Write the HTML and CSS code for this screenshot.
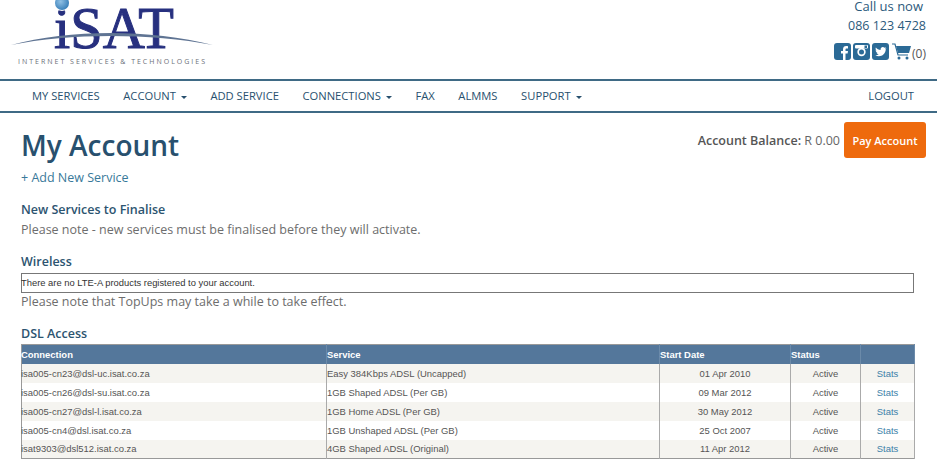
FILE: index.html
```html
<!DOCTYPE html>
<html lang="en">
<head>
<meta charset="utf-8">
<title>My Account</title>
<link rel="stylesheet" href="styles.css">
</head>
<body>
<header class="top">
  <svg class="logo" width="220" height="79" viewBox="0 0 220 79">
    <defs>
      <radialGradient id="ball" cx="0.4" cy="0.4" r="0.7"><stop offset="0" stop-color="#8fc0e4"/><stop offset="1" stop-color="#2f78b4"/></radialGradient>
    </defs>
    <text class="logo-name" x="54" y="48" textLength="120" lengthAdjust="spacingAndGlyphs">iSAT</text>
    <circle class="logo-gap" cx="62" cy="2" r="9"/>
    <circle cx="62" cy="3" r="7" fill="url(#ball)"/>
    <path class="logo-swoosh" d="M11 45 C70 29 150 29 213 45 C150 33 70 33 11 45Z"/>
    <text class="logo-tag" x="18" y="64" textLength="187">INTERNET SERVICES &amp; TECHNOLOGIES</text>
  </svg>
  <div class="contact">
    <div class="call">Call us now</div>
    <div class="phone">086 123 4728</div>
    <div class="social">
      <svg class="ico" width="17" height="17" viewBox="0 0 17 17"><rect width="17" height="17" rx="3"/><path class="cut" d="M11.5 17v-6.4h2.1l.4-2.5h-2.5V6.6c0-.8.3-1.2 1.2-1.2H14V3.2c-.4-.1-1.100-.1-1.800-.1-2 0-3.200 1.200-3.200 3.300v1.700H7v2.500h2V17z"/></svg>
      <svg class="ico" width="17" height="17" viewBox="0 0 17 17"><rect width="17" height="17" rx="3"/><circle class="cut" cx="8.500" cy="9" r="4.200"/><circle cx="8.500" cy="9" r="2.500"/><rect class="cut" x="2" y="2" width="13" height="3.500" rx="1"/><rect x="11.500" y="2.500" width="2.500" height="2.500"/></svg>
      <svg class="ico" width="17" height="17" viewBox="0 0 17 17"><rect width="17" height="17" rx="3"/><path class="cut" d="M14.200 5.200c-.4.200-.9.300-1.300.4.500-.3.800-.7 1-1.300-.4.300-.9.400-1.400.5-.9-1-2.500-1-3.300 0-.6.600-.8 1.400-.6 2.200C6.700 6.900 5 6 3.900 4.600c-.6 1-.3 2.400.7 3-.4 0-.7-.1-1-.3 0 1.100.8 2.100 1.900 2.300-.3.100-.7.100-1 0 .3.900 1.200 1.600 2.200 1.600-1 .8-2.200 1.100-3.400 1 3.700 2.300 10.500.8 10.500-6.700.4-.1.700-.4.900-.3z"/></svg>
      <svg class="cart" width="19" height="17" viewBox="0 0 19 17"><path class="cart-line" d="M0 1h3l3 11h10"/><path class="cart-body" d="M4 3h15l-2 7H6z"/><circle class="cart-body" cx="7" cy="15" r="1.500"/><circle class="cart-body" cx="15" cy="15" r="1.500"/></svg>
      <span class="count">(0)</span>
    </div>
  </div>
</header>

<nav class="nav">
  <ul class="nav-left">
    <li>MY SERVICES</li>
    <li>ACCOUNT <i class="caret"></i></li>
    <li>ADD SERVICE</li>
    <li>CONNECTIONS <i class="caret"></i></li>
    <li>FAX</li>
    <li>ALMMS</li>
    <li>SUPPORT <i class="caret"></i></li>
  </ul>
  <div class="logout">LOGOUT</div>
</nav>

<main class="content">
  <div class="title-row">
    <div>
      <h1>My Account</h1>
      <a class="add">+ Add New Service</a>
    </div>
    <div class="balance">
      <span><b>Account Balance:</b> R 0.00</span>
      <button class="pay">Pay Account</button>
    </div>
  </div>

  <h2 class="first">New Services to Finalise</h2>
  <p>Please note - new services must be finalised before they will activate.</p>

  <h2 class="wireless">Wireless</h2>
  <div class="notice">There are no LTE-A products registered to your account.</div>
  <p>Please note that TopUps may take a while to take effect.</p>

  <h2 class="dsl">DSL Access</h2>
  <table class="services">
    <colgroup><col class="c1"><col class="c2"><col class="c3"><col class="c4"><col class="c5"></colgroup>
    <thead>
      <tr><th>Connection</th><th>Service</th><th>Start Date</th><th>Status</th><th></th></tr>
    </thead>
    <tbody>
      <tr><td>isa005-cn23@dsl-uc.isat.co.za</td><td>Easy 384Kbps ADSL (Uncapped)</td><td class="mid">01 Apr 2010</td><td class="mid">Active</td><td class="mid link">Stats</td></tr>
      <tr><td>isa005-cn26@dsl-su.isat.co.za</td><td>1GB Shaped ADSL (Per GB)</td><td class="mid">09 Mar 2012</td><td class="mid">Active</td><td class="mid link">Stats</td></tr>
      <tr><td>isa005-cn27@dsl-l.isat.co.za</td><td>1GB Home ADSL (Per GB)</td><td class="mid">30 May 2012</td><td class="mid">Active</td><td class="mid link">Stats</td></tr>
      <tr><td>isa005-cn4@dsl.isat.co.za</td><td>1GB Unshaped ADSL (Per GB)</td><td class="mid">25 Oct 2007</td><td class="mid">Active</td><td class="mid link">Stats</td></tr>
      <tr><td>isat9303@dsl512.isat.co.za</td><td>4GB Shaped ADSL (Original)</td><td class="mid">11 Apr 2012</td><td class="mid">Active</td><td class="mid link">Stats</td></tr>
    </tbody>
  </table>
</main>
</body>
</html>
```
FILE: styles.css
```css
* { box-sizing: border-box; }
html, body { margin: 0; height: 460px; overflow: hidden; background: #fff; }
body { font-family: "Open Sans", sans-serif; color: #666; width: 937px; }

.top { display: flex; justify-content: space-between; height: 79px; padding-right: 11px; }
.logo { display: block; }
.logo-name { font-family: "Liberation Serif", serif; font-size: 60px; fill: #27307f; stroke: #27307f; stroke-width: 1px; }
.logo-gap { fill: #fff; }
.logo-swoosh { fill: #5f7493; }
.logo-tag { font-family: "Open Sans", sans-serif; font-size: 7px; fill: #6b6f78; }

.contact { text-align: right; color: #2c5a7c; font-size: 12.500px; line-height: 15px; }
.call { margin-right: 3px; font-size: 13px; line-height: 13px; }
.phone { margin-top: 5px; }
.social { display: flex; justify-content: flex-end; align-items: center; gap: 2px; margin-top: 9px; height: 19px; }
.ico { fill: #2b6a96; }
.ico .cut { fill: #fff; }
.cart { margin-left: 1px; }
.cart-line { fill: none; stroke: #2b6a96; stroke-width: 1.200px; }
.cart-body { fill: #2b6a96; }
.count { font-size: 12px; color: #555; margin-left: -1px; margin-top: 3px; }

.nav { height: 34px; border-top: 2px solid #3f6a85; border-bottom: 2px solid #3f6a85; display: flex; justify-content: space-between; align-items: center; padding: 0 23px 1px 32px; font-size: 11.200px; color: #28506e; }
.nav-left { display: flex; gap: 23.600px; list-style: none; margin: 0; padding: 0; }
.caret { display: inline-block; width: 0; height: 0; margin-left: 2px; vertical-align: middle; border-left: 3.500px solid transparent; border-right: 3.500px solid transparent; border-top: 3px solid #28506e; }

.content { padding: 0 23px 0 21px; }
.title-row { display: flex; justify-content: space-between; align-items: flex-start; }
h1 { margin: 13px 0 0; font-size: 28px; line-height: 38px; font-weight: 600; color: #28506e; }
.add { display: block; margin-top: 5px; font-size: 12.500px; line-height: 18px; color: #39799a; }
.balance { display: flex; align-items: center; gap: 4px; margin-top: 9px; margin-right: -12px; font-size: 12.500px; color: #666; }
.balance b { font-weight: 600; color: #555; }
.pay { width: 82px; height: 36px; border: 0; border-radius: 3px; background: #ee6a0d; color: #fff; font: 600 11px "Open Sans", sans-serif; padding: 0; }

h2 { margin: 0; font-size: 12.500px; line-height: 18px; font-weight: 600; color: #2c5470; }
h2.first { margin-top: 14px; }
h2.wireless { margin-top: 14px; }
h2.dsl { margin-top: 14px; }
p { margin: 2px 0 0; font-size: 12.500px; line-height: 18px; color: #6d6d6d; }
.notice { width: 893px; height: 20px; margin-top: 2px; border: 1px solid #777; font: 9.400px/18px "Liberation Sans", sans-serif; color: #333; text-indent: -1px; }
.notice + p { margin-top: 0; }

.services { width: 893px; margin-top: 1px; border-collapse: collapse; table-layout: fixed; font: 9.450px "Liberation Sans", sans-serif; border: 1px solid #999; color: #555; }
.c1 { width: 305px; } .c2 { width: 333px; } .c3 { width: 131px; } .c4 { width: 70px; } .c5 { width: 54px; }
.services th { height: 19px; padding: 0; background: #54779b; color: #fff; text-align: left; font-weight: 700; border-right: 1px solid #6b8aa9; }
.services td { height: 19px; padding: 0; border-right: 1px solid #aaa; white-space: nowrap; }
.services tr > :first-child { text-indent: -1px; }
.services tbody tr:nth-child(odd) { background: #f5f4f0; }
.services .mid { text-align: center; }
.services .link { color: #3c7fa8; }
```
